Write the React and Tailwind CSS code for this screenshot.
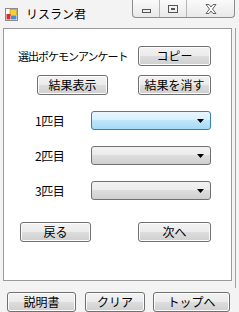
import React from "react";

const font = { fontFamily: '"Noto Sans CJK JP", "Noto Sans", sans-serif' };

function Btn({ children, className = "" }) {
  return (
    <div
      className={
        "h-[20px] flex items-center justify-center rounded-[3px] border border-[#707070] text-[12px] leading-none text-black bg-[linear-gradient(to_bottom,#f2f2f2_0%,#ebebeb_50%,#dddddd_50%,#cfcfcf_100%)] shadow-[inset_0_0_0_1px_#fcfcfc] " +
        className
      }
    >
      {children}
    </div>
  );
}

function Combo({ active }) {
  return (
    <div
      className={
        "w-[120px] h-[19px] rounded-[3px] border flex items-center justify-end pr-[6px] " +
        (active
          ? "border-[#3c7fb1] bg-[linear-gradient(to_bottom,#eaf6fd_0%,#d9f0fc_45%,#bee6fd_50%,#a7d9f5_100%)]"
          : "border-[#707070] bg-[linear-gradient(to_bottom,#f2f2f2_0%,#ebebeb_50%,#dddddd_50%,#cfcfcf_100%)]")
      }
    >
      <svg width="7" height="4" viewBox="0 0 7 4">
        <polygon points="0,0 7,0 3.5,4" fill="#000" />
      </svg>
    </div>
  );
}

export default function App() {
  return (
    <div
      className="w-[239px] h-[312px] bg-[#f3f3f3] overflow-hidden flex flex-col"
      style={font}
    >
      {/* title bar */}
      <div className="h-[28px] flex items-start shrink-0">
        <div className="flex items-center h-[28px] pl-[5px] gap-[8px]">
          <svg width="13" height="13" viewBox="0 0 13 13">
            <rect x="0.5" y="0.5" width="12" height="12" fill="#fff" stroke="#8a8a8a" />
            <rect x="5" y="1.5" width="6.5" height="6" fill="#f4d03a" stroke="#b08a10" strokeWidth="0.6" />
            <rect x="1.5" y="6" width="4" height="5.5" fill="#d62d2d" />
            <rect x="6" y="8" width="5.5" height="3.5" fill="#4f8ad8" />
          </svg>
          <span className="text-[12px] text-black leading-none">リスラン君</span>
        </div>
        <div className="ml-auto mr-[4px] flex h-[18px] border border-t-0 border-[#8c8c8c] rounded-b-[4px] bg-[linear-gradient(to_bottom,#fafafa,#e9e9e9)]">
          <div className="w-[27px] flex items-center justify-center border-r border-[#b5b5b5]">
            <div className="w-[9px] h-[4px] border border-[#555] mt-[4px]" />
          </div>
          <div className="w-[27px] flex items-center justify-center border-r border-[#b5b5b5]">
            <div className="w-[10px] h-[8px] border border-[#555] flex items-center justify-center">
              <div className="w-[4px] h-[2px] border border-[#555]" />
            </div>
          </div>
          <div className="w-[47px] flex items-center justify-center">
            <svg width="12" height="10" viewBox="0 0 12 10">
              <path
                d="M1 0.5 L4 0.5 L6 3 L8 0.5 L11 0.5 L7.5 5 L11 9.5 L8 9.5 L6 7 L4 9.5 L1 9.5 L4.5 5 Z"
                fill="#fff"
                stroke="#555"
                strokeWidth="0.9"
              />
            </svg>
          </div>
        </div>
      </div>

      {/* body */}
      <div className="flex shrink-0">
        <div className="ml-[3px] w-[229px] h-[253px] border border-[#9a9a9a] bg-white flex flex-col pt-[17px]">
          <div className="flex items-center h-[20px]">
            <div className="w-[134px] pl-[14px] text-[11px] tracking-[-1px] text-black leading-none">
              選出ポケモンアンケート
            </div>
            <Btn className="w-[73px]">コピー</Btn>
          </div>
          <div className="flex items-center h-[20px] mt-[9px]">
            <div className="w-[134px] pl-[33px]">
              <Btn className="w-[71px]">結果表示</Btn>
            </div>
            <Btn className="w-[73px]">結果を消す</Btn>
          </div>
          {["1匹目", "2匹目", "3匹目"].map((t, i) => (
            <div key={t} className={"flex items-center h-[19px] " + (i === 0 ? "mt-[16px]" : "mt-[16px]")}>
              <div className="w-[87px] pl-[31px] text-[12px] leading-none text-black tracking-[-0.5px]">
                {t}
              </div>
              <Combo active={i === 0} />
            </div>
          ))}
          <div className="flex items-center h-[20px] mt-[22px]">
            <div className="w-[134px] pl-[16px]">
              <Btn className="w-[71px]">戻る</Btn>
            </div>
            <Btn className="w-[73px]">次へ</Btn>
          </div>
        </div>
        <div className="ml-[3px] w-px h-[260px] bg-[#a0a0a0]" />
      </div>

      {/* bottom buttons */}
      <div className="flex mt-[4px] pl-[7px] gap-[9px] shrink-0">
        <Btn className="w-[69px] !h-[20px]">説明書</Btn>
        <Btn className="w-[60px]">クリア</Btn>
        <Btn className="w-[77px] -ml-[1px]">トップへ</Btn>
      </div>
      <div className="mt-auto h-[6px] border-t border-[#a0a0a0] bg-[#eeeeee]" />
    </div>
  );
}
